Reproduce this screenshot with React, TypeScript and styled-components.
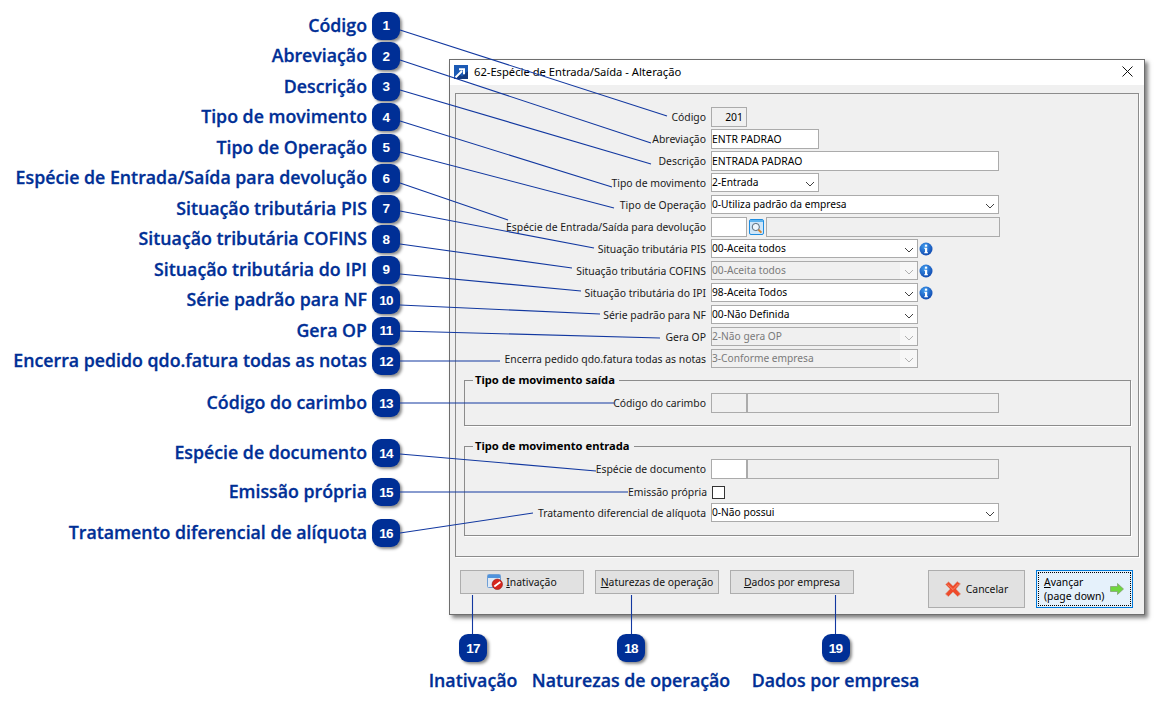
import React from "react";
import styled, { createGlobalStyle } from "styled-components";

const GlobalStyle = createGlobalStyle`
	* { box-sizing: border-box; }
	html, body { margin: 0; padding: 0; background: #fff; }
	body { font-family: "Noto Sans", "Liberation Sans", sans-serif; }
`;

const BLUE = "#002f96";

const leftCallouts: { n: number; text: string; gap: number }[] = [
	{ n: 1, text: "Código", gap: 0 },
	{ n: 2, text: "Abreviação", gap: 2.5 },
	{ n: 3, text: "Descrição", gap: 2.5 },
	{ n: 4, text: "Tipo de movimento", gap: 2.5 },
	{ n: 5, text: "Tipo de Operação", gap: 2.5 },
	{ n: 6, text: "Espécie de Entrada/Saída para devolução", gap: 2.5 },
	{ n: 7, text: "Situação tributária PIS", gap: 2.5 },
	{ n: 8, text: "Situação tributária COFINS", gap: 2.5 },
	{ n: 9, text: "Situação tributária do IPI", gap: 2.5 },
	{ n: 10, text: "Série padrão para NF", gap: 2.5 },
	{ n: 11, text: "Gera OP", gap: 2.5 },
	{ n: 12, text: "Encerra pedido qdo.fatura todas as notas", gap: 2.5 },
	{ n: 13, text: "Código do carimbo", gap: 14 },
	{ n: 14, text: "Espécie de documento", gap: 22 },
	{ n: 15, text: "Emissão própria", gap: 11 },
	{ n: 16, text: "Tratamento diferencial de alíquota", gap: 13 },
];

const leaders = [
	[400, 30, 667, 116],
	[400, 60, 651, 143],
	[400, 90, 651, 164],
	[400, 121, 612, 187],
	[400, 152, 614, 208],
	[400, 183, 508, 220],
	[400, 211, 594, 248],
	[400, 244, 572, 268],
	[400, 274, 581, 291],
	[400, 305, 600, 314],
	[400, 331, 660, 338],
	[400, 361, 500, 361],
	[400, 403, 614, 403],
	[400, 454, 596, 471],
	[400, 492, 628, 492],
	[400, 533, 533, 513],
	[472.5, 595, 472.5, 634],
	[631.5, 595, 631.5, 634],
	[835.5, 595, 835.5, 634],
];

function Chevron() {
	return (
		<svg width="10" height="6" viewBox="0 0 10 6">
			<path d="M1 1 L5 5 L9 1" fill="none" stroke="currentColor" strokeWidth="1" />
		</svg>
	);
}

function InfoIcon() {
	return (
		<svg width="14" height="14" viewBox="0 0 14 14">
			<defs>
				<radialGradient id="infoFill" cx="0.4" cy="0.3" r="0.8">
					<stop offset="0" stopColor="#3f9bee" />
					<stop offset="1" stopColor="#0a3fa8" />
				</radialGradient>
			</defs>
			<circle cx="7" cy="7" r="6.5" fill="url(#infoFill)" />
			<rect x="5.9" y="2.6" width="2.3" height="2.1" fill="#fff" />
			<path d="M5.2 5.8 H8.2 V10.2 H9 V11.2 H5.2 V10.2 H6 V6.8 H5.2 Z" fill="#fff" />
		</svg>
	);
}

function SearchIcon() {
	return (
		<svg width="15" height="16" viewBox="0 0 15 16">
			<rect x="0.5" y="0.5" width="14" height="15" rx="1.5" fill="#cfe6f8" stroke="#1f8de0" />
			<rect x="1" y="1" width="13" height="2" fill="#5db3ee" />
			<circle cx="6.8" cy="8" r="3.6" fill="#eef6fc" stroke="#56697a" />
			<path d="M9.5 10.8 L12.4 13.6" stroke="#d9822b" strokeWidth="2" />
		</svg>
	);
}

function WindowIcon() {
	return (
		<svg width="14" height="14" viewBox="0 0 14 14">
			<rect width="14" height="14" fill="#1c5ab4" />
			<path d="M0 14 L5 9 L8 11.5 L14 6 V14 Z" fill="#123a80" />
			<path d="M1.5 12.5 L8 6 M5 4.2 H10 V9.2" fill="none" stroke="#fff" strokeWidth="2" />
		</svg>
	);
}

function InactiveIcon() {
	return (
		<svg width="16" height="16" viewBox="0 0 16 16">
			<rect x="0.5" y="0.5" width="13" height="13" rx="1" fill="#dfe9f5" stroke="#6f9fd6" />
			<rect x="1" y="1" width="12" height="3" fill="#4f93dc" />
			<circle cx="10.3" cy="10.3" r="5.2" fill="#d7261e" stroke="#8e1510" strokeWidth="0.6" />
			<path d="M7.3 12.6 L13.3 8" stroke="#fff" strokeWidth="1.9" />
		</svg>
	);
}

function CancelIcon() {
	return (
		<svg width="16" height="16" viewBox="0 0 16 16">
			<path
				d="M0.6 3.4 L3.6 0.8 L8 5 L12.2 0.6 L15.4 2.8 L11 8 L15.6 13 L12.6 15.6 L8 11 L3.4 15.6 L0.4 13 L5 8 Z"
				fill="#ee4a2b"
				stroke="#d9a796"
				strokeWidth="0.7"
			/>
			<path d="M2.6 3.4 L8 8.6 L13.4 3" fill="none" stroke="#f98a6c" strokeWidth="1" />
		</svg>
	);
}

function NextIcon() {
	return (
		<svg width="14" height="12" viewBox="0 0 14 12">
			<path d="M0.5 3.5 H7.5 V0.5 L13.5 6 L7.5 11.5 V8.5 H0.5 Z" fill="#6fd63f" stroke="#7f9a70" strokeWidth="0.7" />
		</svg>
	);
}

function CloseIcon() {
	return (
		<svg width="11" height="11" viewBox="0 0 11 11">
			<path d="M0.5 0.5 L10.5 10.5 M10.5 0.5 L0.5 10.5" stroke="#111" strokeWidth="1" />
		</svg>
	);
}

function SelectBox({ value, width, disabled }: { value: string; width: number; disabled?: boolean }) {
	return (
		<Select $width={width} $disabled={disabled}>
			<SelectValue>{value}</SelectValue>
			<SelectArrow $disabled={disabled}>
				<Chevron />
			</SelectArrow>
		</Select>
	);
}

function App() {
	return (
		<Page>
			<GlobalStyle />
			<LeftColumn>
				{leftCallouts.map((c) => (
					<CalloutRow key={c.n} $gap={c.gap}>
						<CalloutText>{c.text}</CalloutText>
						<Badge>{c.n}</Badge>
					</CalloutRow>
				))}
			</LeftColumn>
			<RightColumn>
				<Dialog>
					<TitleBar>
						<WindowIcon />
						<Title>62-Espécie de Entrada/Saída - Alteração</Title>
						<CloseIcon />
					</TitleBar>
					<Body>
						<Panel>
							<Row>
								<Label>Código</Label>
								<Input $width={36} $disabled $right>201</Input>
							</Row>
							<Row>
								<Label>Abreviação</Label>
								<Input $width={108}>ENTR PADRAO</Input>
							</Row>
							<Row>
								<Label>Descrição</Label>
								<Input $width={288}>ENTRADA PADRAO</Input>
							</Row>
							<Row>
								<Label>Tipo de movimento</Label>
								<SelectBox value="2-Entrada" width={108} />
							</Row>
							<Row>
								<Label>Tipo de Operação</Label>
								<SelectBox value="0-Utiliza padrão da empresa" width={288} />
							</Row>
							<Row>
								<Label>Espécie de Entrada/Saída para devolução</Label>
								<Input $width={36} />
								<SearchSlot>
									<SearchIcon />
								</SearchSlot>
								<Input $width={234} $disabled />
							</Row>
							<Row>
								<Label>Situação tributária PIS</Label>
								<SelectBox value="00-Aceita todos" width={207} />
								<InfoSlot>
									<InfoIcon />
								</InfoSlot>
							</Row>
							<Row>
								<Label>Situação tributária COFINS</Label>
								<SelectBox value="00-Aceita todos" width={207} disabled />
								<InfoSlot>
									<InfoIcon />
								</InfoSlot>
							</Row>
							<Row>
								<Label>Situação tributária do IPI</Label>
								<SelectBox value="98-Aceita Todos" width={207} />
								<InfoSlot>
									<InfoIcon />
								</InfoSlot>
							</Row>
							<Row>
								<Label>Série padrão para NF</Label>
								<SelectBox value="00-Não Definida" width={207} />
							</Row>
							<Row>
								<Label>Gera OP</Label>
								<SelectBox value="2-Não gera OP" width={207} disabled />
							</Row>
							<Row>
								<Label>Encerra pedido qdo.fatura todas as notas</Label>
								<SelectBox value="3-Conforme empresa" width={207} disabled />
							</Row>

							<GroupBox $top={9} $height={46}>
								<Legend>Tipo de movimento saída</Legend>
								<GroupRow>
									<GroupLabel>Código do carimbo</GroupLabel>
									<Input $width={36} $disabled />
									<Input $width={252} $disabled />
								</GroupRow>
							</GroupBox>

							<GroupBox $top={18} $height={90}>
								<Legend>Tipo de movimento entrada</Legend>
								<GroupRow>
									<GroupLabel>Espécie de documento</GroupLabel>
									<Input $width={36} />
									<Input $width={252} $disabled />
								</GroupRow>
								<GroupRow>
									<GroupLabel $nudge>Emissão própria</GroupLabel>
									<Check />
								</GroupRow>
								<GroupRow>
									<GroupLabel>Tratamento diferencial de alíquota</GroupLabel>
									<SelectBox value="0-Não possui" width={288} />
								</GroupRow>
							</GroupBox>
						</Panel>
						<Footer>
							<SmallButton>
								<InactiveIcon />
								<span>
									<u>I</u>nativação
								</span>
							</SmallButton>
							<SmallButton>
								<span>
									<u>N</u>aturezas de operação
								</span>
							</SmallButton>
							<SmallButton>
								<span>
									<u>D</u>ados por empresa
								</span>
							</SmallButton>
							<BigButton>
								<CancelIcon />
								<span>Cancelar</span>
							</BigButton>
							<PrimaryButton>
								<PrimaryInner>
									<span>
										<u>A</u>vançar
										<br />
										(page down)
									</span>
									<NextIcon />
								</PrimaryInner>
							</PrimaryButton>
						</Footer>
					</Body>
				</Dialog>
				<BottomRow>
					<BottomCallout $width={88}>
						<Badge>17</Badge>
						<CalloutText>Inativação</CalloutText>
					</BottomCallout>
					<BottomCallout $width={198}>
						<Badge>18</Badge>
						<CalloutText>Naturezas de operação</CalloutText>
					</BottomCallout>
					<BottomCallout $width={167}>
						<Badge>19</Badge>
						<CalloutText>Dados por empresa</CalloutText>
					</BottomCallout>
				</BottomRow>
			</RightColumn>
			<Leaders viewBox="0 0 1157 709">
				{leaders.map(([x1, y1, x2, y2], i) => (
					<line key={i} x1={x1} y1={y1} x2={x2} y2={y2} stroke="#1238a0" strokeWidth="1.1" />
				))}
			</Leaders>
		</Page>
	);
}

const Page = styled.div`
	position: relative;
	display: flex;
	width: 1157px;
	height: 709px;
	overflow: hidden;
	background: #fff;
`;

const LeftColumn = styled.div`
	display: flex;
	flex-direction: column;
	width: 400px;
	padding: 11.5px 0 0;
`;

const CalloutRow = styled.div<{ $gap: number }>`
	display: flex;
	align-items: center;
	justify-content: flex-end;
	gap: 5px;
	height: 28px;
	margin-top: ${(p) => p.$gap}px;
`;

const CalloutText = styled.div`
	padding-bottom: 2px;
	color: ${BLUE};
	font-family: "Open Sans", "Noto Sans", sans-serif;
	font-size: 17.75px;
	font-weight: 600;
	line-height: 24px;
	white-space: nowrap;
	-webkit-text-stroke: 0.3px ${BLUE};
`;

const Badge = styled.div`
	display: flex;
	flex: none;
	align-items: center;
	justify-content: center;
	width: 28px;
	height: 28px;
	border-radius: 9px;
	background: #002f96;
	box-shadow: 2px 2px 3px rgba(0, 0, 0, 0.45);
	color: #fff;
	font-family: "Liberation Sans", Arial, sans-serif;
	font-size: 13.5px;
	font-weight: 700;
	letter-spacing: -0.7px;
`;

const RightColumn = styled.div`
	display: flex;
	flex-direction: column;
	padding: 59px 0 0 29px;
`;

const Dialog = styled.div`
	display: flex;
	flex-direction: column;
	width: 696px;
	height: 556px;
	margin-left: 20px;
	border: 1px solid #6e6e6e;
	background: #f0f0f0;
	box-shadow: 3px 3px 4px rgba(0, 0, 0, 0.5);
	color: #000;
	font-family: "Noto Sans", sans-serif;
	font-size: 10.4px;
`;

const TitleBar = styled.div`
	display: flex;
	flex: none;
	align-items: center;
	gap: 6px;
	height: 25px;
	padding: 0 11px 2px 4px;
	background: #fff;
`;

const Title = styled.div`
	flex: 1;
	font-size: 11.2px;
`;

const Body = styled.div`
	display: flex;
	flex-direction: column;
	flex: 1;
	padding: 8px 5px 0;
`;

const Panel = styled.div`
	display: flex;
	flex-direction: column;
	gap: 2px;
	height: 464px;
	padding: 13px 7px 0 0;
	border: 1px solid #8c8c8c;
	box-shadow: 1px 1px 0 #fff;
`;

const Row = styled.div`
	display: flex;
	align-items: flex-start;
	height: 20px;
`;

const Label = styled.div`
	flex: none;
	width: 250px;
	margin-right: 5px;
	color: #1a1a1a;
	line-height: 20px;
	text-align: right;
	white-space: nowrap;
`;

const Input = styled.div<{ $width: number; $disabled?: boolean; $right?: boolean }>`
	flex: none;
	width: ${(p) => p.$width}px;
	height: 20px;
	padding: ${(p) => (p.$right ? "0 3px 0 0" : "0")};
	border: 1px solid #ababab;
	background: ${(p) => (p.$disabled ? "#f0f0f0" : "#fff")};
	line-height: 18px;
	text-align: ${(p) => (p.$right ? "right" : "left")};
	white-space: nowrap;
`;

const Select = styled.div<{ $width: number; $disabled?: boolean }>`
	display: flex;
	flex: none;
	align-items: stretch;
	width: ${(p) => p.$width}px;
	height: 19px;
	border: 1px solid #ababab;
	background: ${(p) => (p.$disabled ? "#f0f0f0" : "#fff")};
	color: ${(p) => (p.$disabled ? "#7a7a7a" : "#000")};
`;

const SelectValue = styled.div`
	flex: 1;
	font-size: 10.2px;
	line-height: 16px;
	white-space: nowrap;
`;

const SelectArrow = styled.div<{ $disabled?: boolean }>`
	display: flex;
	flex: none;
	align-items: center;
	justify-content: center;
	width: 17px;
	padding-top: 2px;
	background: ${(p) => (p.$disabled ? "#f7f7f7" : "transparent")};
	color: ${(p) => (p.$disabled ? "#b0b0b0" : "#404040")};
`;

const SearchSlot = styled.div`
	display: flex;
	flex: none;
	align-items: center;
	justify-content: center;
	width: 18px;
	height: 20px;
	margin-right: 1px;
`;

const InfoSlot = styled.div`
	display: flex;
	align-items: center;
	height: 19px;
	padding: 0 0 0 1px;
`;

const GroupBox = styled.div<{ $top: number; $height: number }>`
	position: relative;
	display: flex;
	flex-direction: column;
	flex: none;
	gap: 2px;
	height: ${(p) => p.$height}px;
	margin: ${(p) => p.$top}px 0 0 8px;
	padding-top: 12px;
	border: 1px solid #8c8c8c;
	box-shadow: 1px 1px 0 #fff;
`;

const Legend = styled.div`
	position: absolute;
	top: -9px;
	left: 8px;
	padding: 0 4px 0 2px;
	background: #f0f0f0;
	font-size: 11.2px;
	font-weight: 700;
	line-height: 16px;
`;

const GroupRow = styled(Row)``;

const GroupLabel = styled.div<{ $nudge?: boolean }>`
	flex: none;
	width: 241px;
	margin-right: 5px;
	color: #1a1a1a;
	line-height: ${(p) => (p.$nudge ? "22px" : "20px")};
	text-align: right;
	white-space: nowrap;
	transform: ${(p) => (p.$nudge ? "translateX(1px)" : "none")};
`;

const Check = styled.div`
	width: 13px;
	height: 13px;
	margin: 5px 0 0 1px;
	border: 1px solid #333;
	background: #fff;
`;

const Footer = styled.div`
	display: flex;
	align-items: flex-start;
	gap: 11px;
	padding: 13px 6px 0 5px;
`;

const SmallButton = styled.div`
	display: flex;
	flex: none;
	align-items: center;
	justify-content: center;
	gap: 3px;
	width: 124px;
	height: 24px;
	border: 1px solid #adadad;
	background: #e1e1e1;
	color: #111;
	white-space: nowrap;
`;

const BigButton = styled(SmallButton)`
	gap: 5px;
	width: 97px;
	height: 38px;
	margin-left: 63px;
`;

const PrimaryButton = styled.div`
	flex: none;
	width: 97px;
	height: 38px;
	padding: 1px;
	border: 1px solid #0078d7;
	background: #e5f1fb;
`;

const PrimaryInner = styled.div`
	display: flex;
	align-items: center;
	justify-content: space-between;
	height: 100%;
	padding: 0 6px 0 5px;
	border: 1px dotted #000;
	line-height: 14px;
	white-space: nowrap;
`;

const BottomRow = styled.div`
	display: flex;
	align-items: flex-start;
	padding-top: 19px;
`;

const BottomCallout = styled.div<{ $width: number }>`
	display: flex;
	flex-direction: column;
	flex: none;
	align-items: center;
	gap: 6px;
	width: ${(p) => p.$width}px;
	margin-right: ${(p) => (p.$width === 88 ? 15 : 22)}px;
`;

const Leaders = styled.svg`
	position: absolute;
	top: 0;
	left: 0;
	width: 1157px;
	height: 709px;
	pointer-events: none;
`;

export default App;
